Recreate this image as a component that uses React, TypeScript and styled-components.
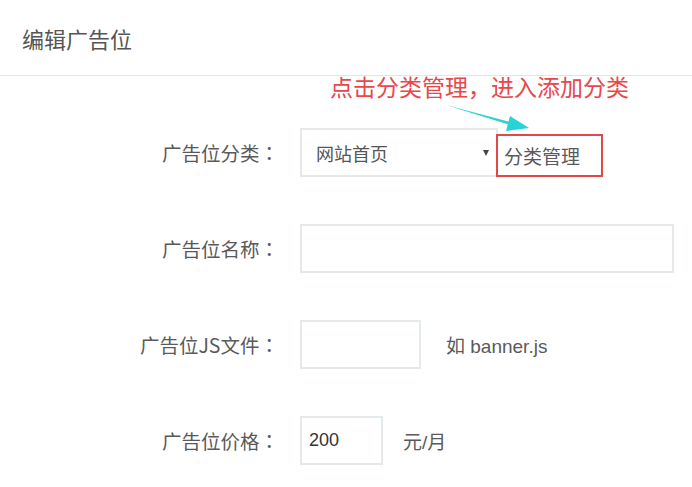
import React from 'react';
import styled, { createGlobalStyle } from 'styled-components';

const GlobalStyle = createGlobalStyle`
  html, body {
    margin: 0;
    padding: 0;
    background: #fff;
  }
  body {
    font-family: 'Noto Sans CJK SC', 'Liberation Sans', sans-serif;
    color: #555;
  }
`;

const Page = styled.div`
  position: relative;
  width: 692px;
  height: 487px;
  overflow: hidden;
`;

const Header = styled.div`
  height: 76px;
  display: flex;
  align-items: center;
  padding-left: 22px;
  border-bottom: 1px solid #e1e5e7;
  box-sizing: border-box;
`;

const Title = styled.h2`
  margin: 0;
  font-size: 22px;
  font-weight: 400;
  color: #555;
  line-height: 1;
`;

const Form = styled.div`
  display: flex;
  flex-direction: column;
  gap: 47px;
  padding-top: 52px;
`;

const Row = styled.div`
  display: grid;
  grid-template-columns: 279px auto;
  column-gap: 21px;
  align-items: center;
  height: 49px;
`;

const Label = styled.label`
  text-align: right;
  font-size: 19.5px;
  color: #5a5a5a;
  white-space: nowrap;
`;

/* full-width colon, centred in its cell */
const Colon = styled.span`
  font-family: 'Noto Sans CJK TC', sans-serif;
`;

const Field = styled.div`
  display: flex;
  align-items: center;
  height: 100%;
`;

const Input = styled.input<{ $width: number }>`
  width: ${(p) => p.$width}px;
  height: 49px;
  box-sizing: border-box;
  border: 2px solid #e4e9eb;
  padding: 0 7px;
  font-family: 'Liberation Sans', 'Noto Sans CJK SC', sans-serif;
  font-size: 18px;
  color: #333;
  outline: none;
  background: #fff;
`;

const SelectBox = styled.div`
  width: 198px;
  height: 49px;
  box-sizing: border-box;
  border: 2px solid #e4e9eb;
  display: flex;
  align-items: center;
  justify-content: space-between;
  padding: 0 7px 0 14px;
  font-size: 18px;
  color: #555;
`;

/* small filled down-triangle of the dropdown */
const Caret = styled.span`
  width: 0;
  height: 0;
  border-left: 3px solid transparent;
  border-right: 3px solid transparent;
  border-top: 6px solid #444;
`;

const ManageLink = styled.a`
  align-self: flex-end;
  margin-left: -2px;
  height: 43px;
  width: 107px;
  box-sizing: border-box;
  border: 2px solid #e2474a;
  display: flex;
  align-items: center;
  padding-left: 6px;
  font-size: 19px;
  color: #5a5a5a;
  text-decoration: none;
  cursor: pointer;
`;

const Hint = styled.span<{ $gap: number }>`
  margin-left: ${(p) => p.$gap}px;
  font-family: 'Liberation Sans', 'Noto Sans CJK SC', sans-serif;
  font-size: 19px;
  color: #5a5a5a;
`;

const Note = styled.div`
  position: absolute;
  left: 330px;
  top: 75px;
  font-size: 23px;
  line-height: 1;
  color: #e8474b;
  white-space: nowrap;
`;

const Pointer = styled.svg`
  position: absolute;
  left: 440px;
  top: 100px;
`;

const App: React.FC = () => {
  return (
    <Page>
      <GlobalStyle />
      <Header>
        <Title>编辑广告位</Title>
      </Header>
      <Form>
        <Row>
          <Label>广告位分类<Colon>：</Colon></Label>
          <Field>
            <SelectBox>
              网站首页
              <Caret />
            </SelectBox>
            <ManageLink>分类管理</ManageLink>
          </Field>
        </Row>
        <Row>
          <Label>广告位名称<Colon>：</Colon></Label>
          <Field>
            <Input $width={374} />
          </Field>
        </Row>
        <Row>
          <Label>广告位JS文件<Colon>：</Colon></Label>
          <Field>
            <Input $width={121} />
            <Hint $gap={25}>如 banner.js</Hint>
          </Field>
        </Row>
        <Row>
          <Label>广告位价格<Colon>：</Colon></Label>
          <Field>
            <Input $width={83} defaultValue="200" />
            <Hint $gap={20}>元/月</Hint>
          </Field>
        </Row>
      </Form>

      <Note>点击分类管理，进入添加分类</Note>
      <Pointer width="100" height="40" viewBox="0 0 100 40">
        <path d="M6 5 L76 23.5 L75 26.5 Z" fill="#27d3d6" />
        <path d="M70 16 L89 28 L66 31 Z" fill="#27d3d6" />
      </Pointer>
    </Page>
  );
};

export default App;
